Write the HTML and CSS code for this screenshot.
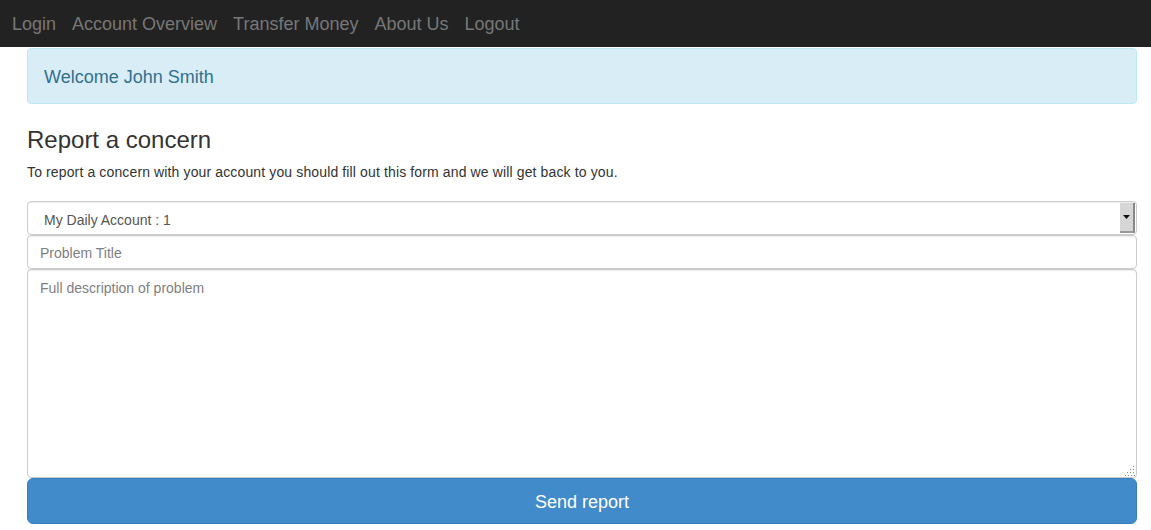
FILE: index.html
```html
<!DOCTYPE html>
<html>
<head>
<meta charset="utf-8">
<title>Report a concern</title>
<link rel="stylesheet" href="styles.css">
</head>
<body>
<nav class="navbar">
  <a href="#">Login</a>
  <a href="#">Account Overview</a>
  <a href="#">Transfer Money</a>
  <a href="#">About Us</a>
  <a href="#">Logout</a>
</nav>
<main class="container">
  <div class="alert">Welcome John Smith</div>
  <h2 class="title">Report a concern</h2>
  <p class="lead-text">To report a concern with your account you should fill out this form and we will get back to you.</p>
  <form class="form">
    <div class="select-wrap">
      <select class="control select">
        <option>My Daily Account : 1</option>
      </select>
      <span class="select-arrow"><svg width="7" height="4" viewBox="0 0 7 4"><path d="M0 0h7L3.5 4z" fill="#111"/></svg></span>
    </div>
    <input class="control input" type="text" placeholder="Problem Title">
    <div class="textarea-wrap">
      <textarea class="control textarea" placeholder="Full description of problem"></textarea>
      <svg class="grip" width="10" height="10" viewBox="0 0 10 10">
        <g fill="#888">
          <rect x="8" y="0" width="1" height="1"/>
          <rect x="5" y="3" width="1" height="1"/><rect x="8" y="3" width="1" height="1"/>
          <rect x="2" y="6" width="1" height="1"/><rect x="5" y="6" width="1" height="1"/><rect x="8" y="6" width="1" height="1"/>
          <rect x="0" y="9" width="1" height="1"/><rect x="3" y="9" width="1" height="1"/><rect x="6" y="9" width="1" height="1"/><rect x="9" y="9" width="1" height="1"/>
        </g>
      </svg>
    </div>
    <button type="button" class="btn">Send report</button>
  </form>
</main>
</body>
</html>
```
FILE: styles.css
```css
* { box-sizing: border-box; }
html, body { margin: 0; padding: 0; }
body {
  font-family: "Liberation Sans", Arial, sans-serif;
  font-size: 14px;
  color: #333;
  background: #fff;
}
.navbar {
  height: 47px;
  background: #222;
  display: flex;
  align-items: center;
  gap: 16px;
  padding: 0 12px;
}
.navbar a {
  color: #777;
  font-size: 18px;
  text-decoration: none;
  line-height: 20px;
}
.container {
  padding: 0 14px 0 27px;
}
.alert {
  height: 56px;
  background: #d9edf7;
  border: 1px solid #bce8f1;
  border-radius: 4px;
  color: #31708f;
  font-size: 18px;
  display: flex;
  align-items: center;
  padding: 2px 16px 0;
  margin-top: 1px;
}
.title {
  font-size: 24px;
  font-weight: 500;
  line-height: 26px;
  margin: 23px 0 0;
}
.lead-text {
  margin: 9px 0 0;
  font-size: 14px;
  line-height: 20px;
  letter-spacing: 0.13px;
}
.form {
  display: flex;
  flex-direction: column;
  margin-top: 19px;
}
.control {
  display: block;
  width: 100%;
  border: 1px solid #ccc;
  border-radius: 4px;
  box-shadow: inset 0 1px 1px rgba(0,0,0,.075);
  font-family: inherit;
  font-size: 14px;
  color: #555;
  background: #fff;
  margin: 0;
}
.control::placeholder { color: #808080; }
.select-wrap { position: relative; }
.select {
  height: 34px;
  padding: 4px 30px 0 16px;
  appearance: none;
  -webkit-appearance: none;
}
.select-arrow {
  position: absolute;
  right: 2px;
  top: 2px;
  width: 15px;
  height: 30px;
  background: #d6d6d6;
  border-right: 2px solid #888;
  border-bottom: 2px solid #999;
  display: flex;
  align-items: center;
  justify-content: center;
  pointer-events: none;
}
.input {
  height: 34px;
  padding: 7px 12px 5px;
}
.textarea-wrap { position: relative; }
.textarea {
  height: 209px;
  padding: 9px 12px;
  resize: none;
  line-height: 18px;
}
.grip {
  position: absolute;
  right: 2px;
  bottom: 2px;
  display: block;
}
.btn {
  height: 46px;
  width: 100%;
  background: #428bca;
  border: 1px solid #357ebd;
  border-radius: 6px;
  color: #fff;
  font-family: inherit;
  font-size: 18px;
  padding: 3px 0 0;
}
```
